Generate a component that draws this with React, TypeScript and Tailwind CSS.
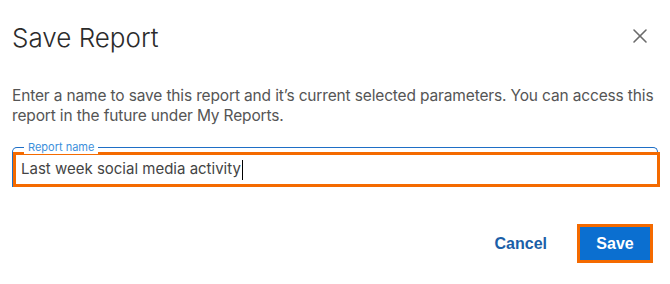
import React from 'react';
import { X } from 'lucide-react';

export default function App() {
  return (
    <div className="w-[670px] h-[284px] bg-white px-3 font-['Inter','Noto_Sans',sans-serif]">
      <div className="flex items-start justify-between pt-[22px]">
        <h1 className="text-[26px] leading-[32px] font-light text-[#2b2b2b]">Save Report</h1>
        <button className="mt-[2px] mr-[6px] text-[#6b6b6b]">
          <X size={24} strokeWidth={1.6} />
        </button>
      </div>

      <p className="mt-[32px] text-[15.5px] tracking-[-0.15px] leading-5 text-[#555]">
        Enter a name to save this report and it’s current selected parameters. You can access this
        report in the future under My Reports.
      </p>

      <div className="relative mt-[21px] border-x border-t border-[#1f6fc6] rounded-t-[5px] pt-[4px]">
        <span className="absolute left-[11px] top-[-8px] bg-white px-1 text-[11px] leading-[14px] text-[#3c8fdb]">
          Report name
        </span>
        <div className="flex items-center h-[35px] w-[647px] border-[3px] border-[#f46a00] pl-[5px] text-[15px] text-[#444]">
          <span>Last week social media activity</span>
          <span className="ml-px inline-block w-px h-[20px] bg-black" />
        </div>
      </div>

      <div className="mt-[37px] flex items-center justify-end mr-[5px] font-['Liberation_Sans',Arial,sans-serif]">
        <button className="mr-[30px] text-[16px] font-bold text-[#1b5fa8]">Cancel</button>
        <button className="w-[76px] h-[39px] bg-[#0b6fd0] border-[3px] border-[#f46a00] text-[16px] font-bold text-white">
          Save
        </button>
      </div>
    </div>
  );
}
